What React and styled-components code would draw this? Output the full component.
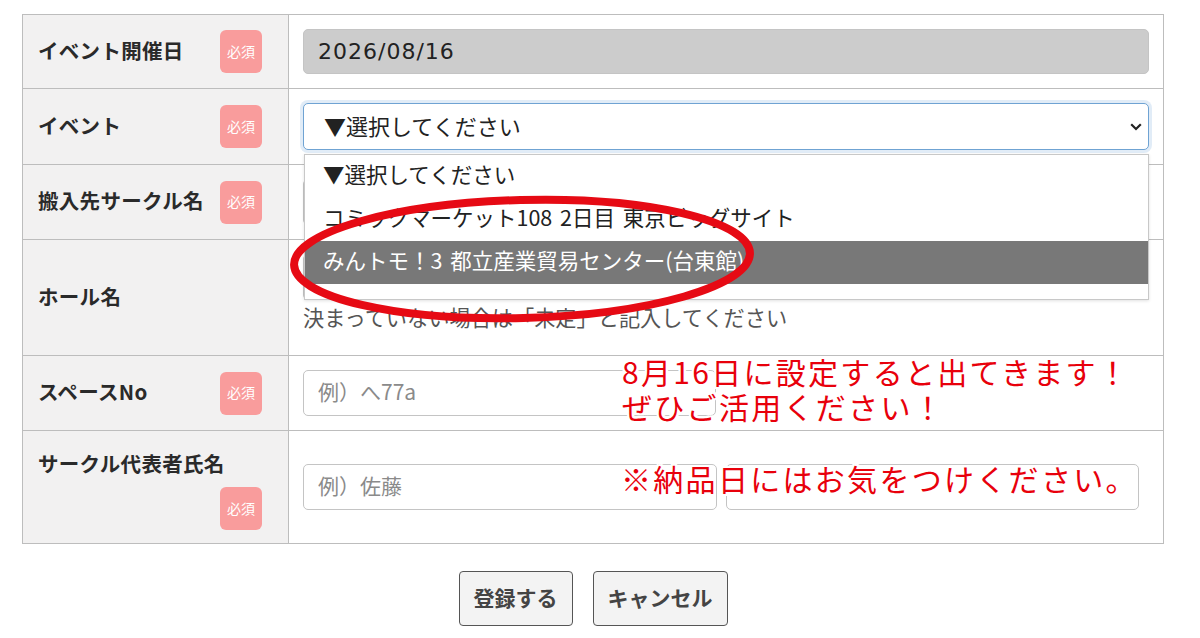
import React from 'react';
import styled, { createGlobalStyle } from 'styled-components';

const GlobalStyle = createGlobalStyle`
  body {
    margin: 0;
    background: #fff;
    font-family: "Noto Sans CJK JP", "Noto Sans", sans-serif;
    color: #222;
  }
`;

const Page = styled.div`
  position: relative;
  width: 1200px;
  height: 638px;
  padding: 14px 36px 0 22px;
  box-sizing: border-box;
  overflow: hidden;
`;

const Table = styled.div`
  border: 1px solid #bdbdbd;
  border-bottom: none;
`;

const Row = styled.div`
  display: flex;
  border-bottom: 1px solid #bdbdbd;
`;

const LabelCell = styled.div`
  width: 266px;
  flex: none;
  box-sizing: border-box;
  background: #f2f1f1;
  border-right: 1px solid #bdbdbd;
  padding: 13px 26px 13px 15px;
  display: flex;
  flex-wrap: wrap;
  align-items: center;
  align-content: center;
  row-gap: 1px;
`;

const LabelText = styled.span`
  font-size: 20.5px;
  font-weight: 700;
  letter-spacing: 0.3px;
  line-height: 38px;
  padding-bottom: 4px;
  color: #2a2a2a;
  white-space: nowrap;
`;

const Badge = styled.span`
  margin-left: auto;
  width: 42px;
  height: 43px;
  box-sizing: border-box;
  padding-bottom: 2px;
  border-radius: 6px;
  background: #f99c9c;
  color: #fff;
  font-size: 14px;
  display: flex;
  align-items: center;
  justify-content: center;
`;

const ValueCell = styled.div`
  flex: 1;
  min-width: 0;
  padding: 14px 14px ${(p) => (p.$tall ? '20px' : '14px')};
  display: flex;
  flex-direction: column;
  justify-content: center;
`;

const Input = styled.input`
  box-sizing: border-box;
  width: ${(p) => p.$width || '100%'};
  height: ${(p) => (p.$filled ? '45px' : '46px')};
  border: 1px solid #c4c4c4;
  border-radius: 5px;
  background: ${(p) => (p.$filled ? '#cccccc' : '#fff')};
  padding: 0 14px ${(p) => (p.$filled ? '0' : '4px')};
  font-family: ${(p) => (p.$filled ? '"DejaVu Sans", sans-serif' : '"Noto Sans CJK JP", sans-serif')};
  font-size: ${(p) => (p.$filled ? '22px' : '21px')};
  letter-spacing: ${(p) => (p.$filled ? '1px' : '0')};
  color: #222;
  outline: none;

  &::placeholder {
    color: #8a8a8a;
  }
`;

const InputPair = styled.div`
  display: flex;
  gap: 9px;
  width: 836px;
`;

const Helper = styled.div`
  margin: 2px 0 3px;
  font-size: 21.2px;
  line-height: 30px;
  color: #555;
`;

const SelectWrap = styled.div`
  position: relative;
`;

const SelectBox = styled.div`
  box-sizing: border-box;
  height: 47px;
  border: 1px solid #6fa3d3;
  border-radius: 5px;
  box-shadow: 0 0 0 3px rgba(120, 170, 220, 0.22);
  padding: 0 6px 4px 20px;
  display: flex;
  align-items: center;
  justify-content: space-between;
  font-size: 22px;
  color: #222;
  background: #fff;

  svg {
    margin-top: 4px;
  }
`;

const OptionList = styled.ul`
  position: absolute;
  top: calc(100% + 4px);
  left: 1px;
  right: 0;
  margin: 0;
  padding: 0 0 15px;
  list-style: none;
  background: #fff;
  border: 1px solid #c8c8c8;
  box-shadow: 0 1px 3px rgba(0, 0, 0, 0.12);
  z-index: 2;
`;

const Option = styled.li`
  height: 43px;
  box-sizing: border-box;
  line-height: 37px;
  padding: 0 0 6px 18px;
  font-size: 21.5px;
  word-spacing: 3px;
  color: ${(p) => (p.$active ? '#fff' : '#222')};
  background: ${(p) => (p.$active ? '#787878' : 'transparent')};
  white-space: nowrap;
`;

const ButtonRow = styled.div`
  display: flex;
  justify-content: center;
  gap: 20px;
  margin-top: 27px;
`;

const Button = styled.button`
  height: 55px;
  padding: 0 14px 4px;
  border: 1px solid #555;
  border-radius: 4px;
  background: #f3f3f3;
  font-family: "Noto Sans CJK JP", sans-serif;
  font-size: 21px;
  font-weight: 700;
  color: #444;
`;

const Ellipse = styled.svg`
  position: absolute;
  left: 280px;
  top: 185px;
  z-index: 3;
  pointer-events: none;
`;

const Note = styled.div`
  position: absolute;
  left: ${(p) => p.$left}px;
  top: ${(p) => p.$top}px;
  z-index: 3;
  font-size: 30px;
  line-height: 35px;
  letter-spacing: 2.3px;
  color: #e8000b;
  white-space: nowrap;
  text-shadow:
    2px 0 0 #fff, -2px 0 0 #fff, 0 2px 0 #fff, 0 -2px 0 #fff,
    2px 2px 0 #fff, -2px -2px 0 #fff, 2px -2px 0 #fff, -2px 2px 0 #fff;
`;

const events = [
  '▼選択してください',
  'コミックマーケット108 2日目 東京ビッグサイト',
  'みんトモ！3 都立産業貿易センター(台東館)',
];

function Field({ label, children, tall }) {
  return (
    <Row>
      <LabelCell>
        <LabelText>{label}</LabelText>
        <Badge>必須</Badge>
      </LabelCell>
      <ValueCell $tall={tall}>{children}</ValueCell>
    </Row>
  );
}

function App() {
  return (
    <Page>
      <GlobalStyle />
      <Table>
        <Field label="イベント開催日">
          <Input $filled readOnly value="2026/08/16" />
        </Field>
        <Field label="イベント">
          <SelectWrap>
            <SelectBox>
              <span>▼選択してください</span>
              <svg width="12" height="8" viewBox="0 0 12 8">
                <polyline points="1.2,1.2 6,6 10.8,1.2" fill="none" stroke="#222" strokeWidth="2.2" />
              </svg>
            </SelectBox>
            <OptionList>
              {events.map((ev, i) => (
                <Option key={ev} $active={i === 2}>{ev}</Option>
              ))}
            </OptionList>
          </SelectWrap>
        </Field>
        <Field label="搬入先サークル名">
          <Input />
        </Field>
        <Row>
          <LabelCell>
            <LabelText>ホール名</LabelText>
          </LabelCell>
          <ValueCell $tall>
            <Input />
            <Helper>決まっていない場合は「未定」と記入してください</Helper>
          </ValueCell>
        </Row>
        <Field label="スペースNo">
          <Input $width="413px" placeholder="例）へ77a" />
        </Field>
        <Field label="サークル代表者氏名">
          <InputPair>
            <Input placeholder="例）佐藤" />
            <Input />
          </InputPair>
        </Field>
      </Table>
      <ButtonRow>
        <Button>登録する</Button>
        <Button>キャンセル</Button>
      </ButtonRow>

      <Ellipse width="490" height="150" viewBox="0 0 490 150">
        <ellipse cx="242" cy="74" rx="228" ry="59" fill="none" stroke="#e60a14" strokeWidth="8" transform="rotate(-1.5 242 74)" />
      </Ellipse>
      <Note $left={622} $top={354}>
        8月16日に設定すると出てきます！<br />ぜひご活用ください！
      </Note>
      <Note $left={621} $top={461}>※納品日にはお気をつけください。</Note>
    </Page>
  );
}

export default App;
